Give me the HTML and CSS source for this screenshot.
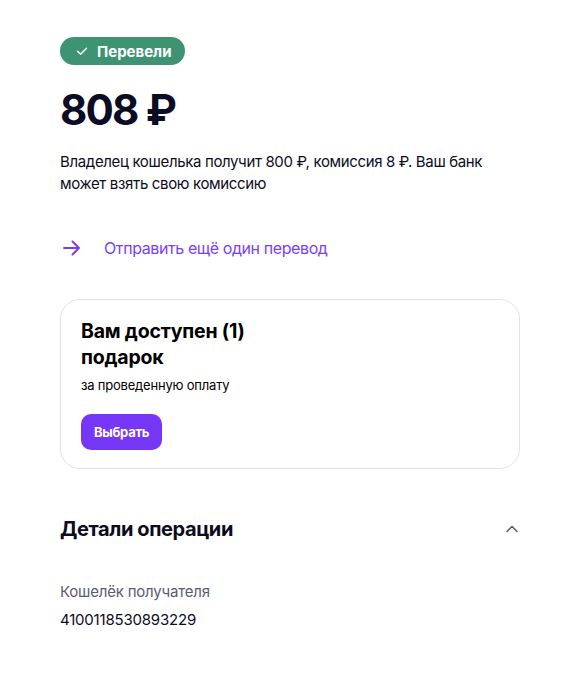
FILE: index.html
```html
<!DOCTYPE html>
<html lang="ru">
<head>
<meta charset="utf-8">
<link rel="stylesheet" href="styles.css">
</head>
<body>
<main class="page">
  <div class="badge">
    <svg class="badge-icon" width="12" height="12" viewBox="0 0 12 12"><path d="M1.5 6.2 L4.6 9.2 L10.5 3.2" fill="none" stroke="#fff" stroke-width="1.4" stroke-linecap="round" stroke-linejoin="round"/></svg>
    <span>Перевели</span>
  </div>
  <h1 class="amount">808 ₽</h1>
  <p class="desc">Владелец кошелька получит 800 ₽, комиссия 8 ₽. Ваш банк может взять свою комиссию</p>
  <a class="link" href="#">
    <svg class="link-icon" width="20" height="20" viewBox="0 0 20 20"><path d="M2 10 H17 M10.5 3.5 L17 10 L10.5 16.5" fill="none" stroke="#7b3ff2" stroke-width="2" stroke-linecap="round" stroke-linejoin="round"/></svg>
    <span>Отправить ещё один перевод</span>
  </a>
  <section class="card">
    <h2 class="card-title">Вам доступен (1) подарок</h2>
    <p class="card-sub">за проведенную оплату</p>
    <button class="btn">Выбрать</button>
  </section>
  <div class="details-head">
    <h3>Детали операции</h3>
    <svg width="14" height="14" viewBox="0 0 14 14"><path d="M2 9.5 L7 4.5 L12 9.5" fill="none" stroke="#55556a" stroke-width="1.5" stroke-linecap="round" stroke-linejoin="round"/></svg>
  </div>
  <div class="field">
    <div class="field-label">Кошелёк получателя</div>
    <div class="field-value">4100118530893229</div>
  </div>
</main>
</body>
</html>
```
FILE: styles.css
```css
* { box-sizing: border-box; }
html, body { margin: 0; background: #fff; }
body { font-family: Inter, "Noto Sans", sans-serif; color: #000; }
.page { width: 460px; margin-left: 60px; padding-top: 37px; }
.badge {
  display: inline-flex; align-items: center; gap: 9px;
  height: 28px; padding: 0 13px 0 16px; border-radius: 14px;
  background: #3e9373; color: #fff; font-weight: 700; font-size: 15px;
}
.badge-icon { display: block; }
.amount { margin: 18px 0 0; font-size: 42px; line-height: 54px; font-weight: 700; color: #0c0c24; letter-spacing: -1.8px; }
.desc { margin: 14px 0 0; font-size: 15px; line-height: 22px; color: #0c0c1e; letter-spacing: -0.35px; width: 440px; }
.link { display: flex; align-items: center; gap: 22px; margin-top: 40px; height: 26px; text-decoration: none; color: #7b3ff2; font-size: 16px; letter-spacing: -0.4px; padding-left: 2px; }
.link-icon { display: block; }
.card {
  margin-top: 38px; border: 1px solid #e2e2e6; border-radius: 20px;
  padding: 18px 20px 18px; height: 170px;
}
.card-title { margin: 0; width: 190px; font-size: 19.5px; line-height: 26px; font-weight: 700; letter-spacing: -0.2px; }
.card-sub { margin: 6px 0 0; font-size: 13px; line-height: 18px; letter-spacing: -0.2px; }
.btn {
  margin-top: 20px; height: 36px; padding: 0 13px; border: 0; border-radius: 10px;
  background: #7636f5; color: #fff; font-family: inherit; font-weight: 700; font-size: 13px; letter-spacing: -0.3px;
}
.details-head { display: flex; justify-content: space-between; align-items: center; margin-top: 46px; padding-right: 1px; }
.details-head h3 { margin: 0; font-size: 20px; line-height: 28px; font-weight: 700; color: #0c0c1e; letter-spacing: -0.4px; }
.details-head svg { display: block; }
.field { margin-top: 38px; }
.field-label { font-size: 15px; line-height: 22px; color: #5b5b70; letter-spacing: -0.2px; }
.field-value { margin-top: 6px; font-size: 15px; line-height: 22px; color: #0c0c1e; letter-spacing: -0.2px; }
```
